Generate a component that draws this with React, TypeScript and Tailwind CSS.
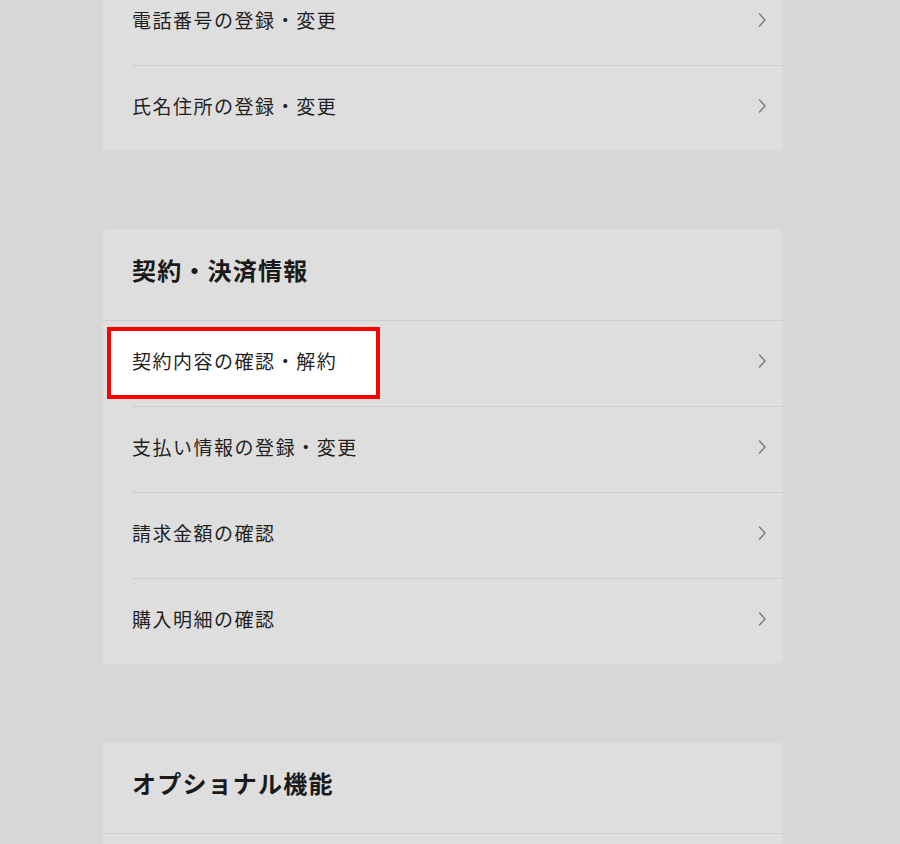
import React from "react";

const font = { fontFamily: '"Noto Sans CJK JP", "Noto Sans", sans-serif' };

function Chevron() {
  return (
    <svg width="10" height="16" viewBox="0 0 10 16" className="shrink-0">
      <path d="M2.5 2 L8 8 L2.5 14" fill="none" stroke="#7b7b7b" strokeWidth="1.4" strokeLinecap="round" strokeLinejoin="round" />
    </svg>
  );
}

function Row({ label, last, highlight }: { label: string; last?: boolean; highlight?: boolean }) {
  return (
    <div className="relative pl-[30px]">
      {highlight && (
        <div className="absolute left-[5px] top-[6px] w-[273px] h-[72px] bg-white border-4 border-[#ff0000]" />
      )}
      <div
        className={
          "relative flex items-center justify-between pr-[16px] pb-[5px] " +
          (last ? "h-[85px]" : "h-[86px] border-b border-[#cdcdcd]")
        }
      >
        <span className="text-[19px] tracking-[0.08em] text-[#1f1f1f]">{label}</span>
        <Chevron />
      </div>
    </div>
  );
}

function Header({ title }: { title: string }) {
  return (
    <div className="flex h-[92px] items-center pl-[30px] pb-[9px] border-b border-[#cdcdcd]">
      <h2 className="text-[24px] font-bold tracking-[0.05em] text-[#1a1a1a]">{title}</h2>
    </div>
  );
}

export default function App() {
  return (
    <div className="h-[844px] w-full overflow-hidden bg-[#d7d7d7]" style={font}>
      <div className="ml-[102px] w-[681px] -mt-[20px] flex flex-col gap-[78px] pb-[40px]">
        <div className="rounded-b-[6px] bg-[#dedede]">
          <Row label="電話番号の登録・変更" />
          <Row label="氏名住所の登録・変更" last />
        </div>
        <div className="rounded-[6px] bg-[#dedede]">
          <Header title="契約・決済情報" />
          <Row label="契約内容の確認・解約" highlight />
          <Row label="支払い情報の登録・変更" />
          <Row label="請求金額の確認" />
          <Row label="購入明細の確認" last />
        </div>
        <div className="rounded-[6px] bg-[#dedede]">
          <Header title="オプショナル機能" />
          <div className="h-[86px]" />
        </div>
      </div>
    </div>
  );
}
